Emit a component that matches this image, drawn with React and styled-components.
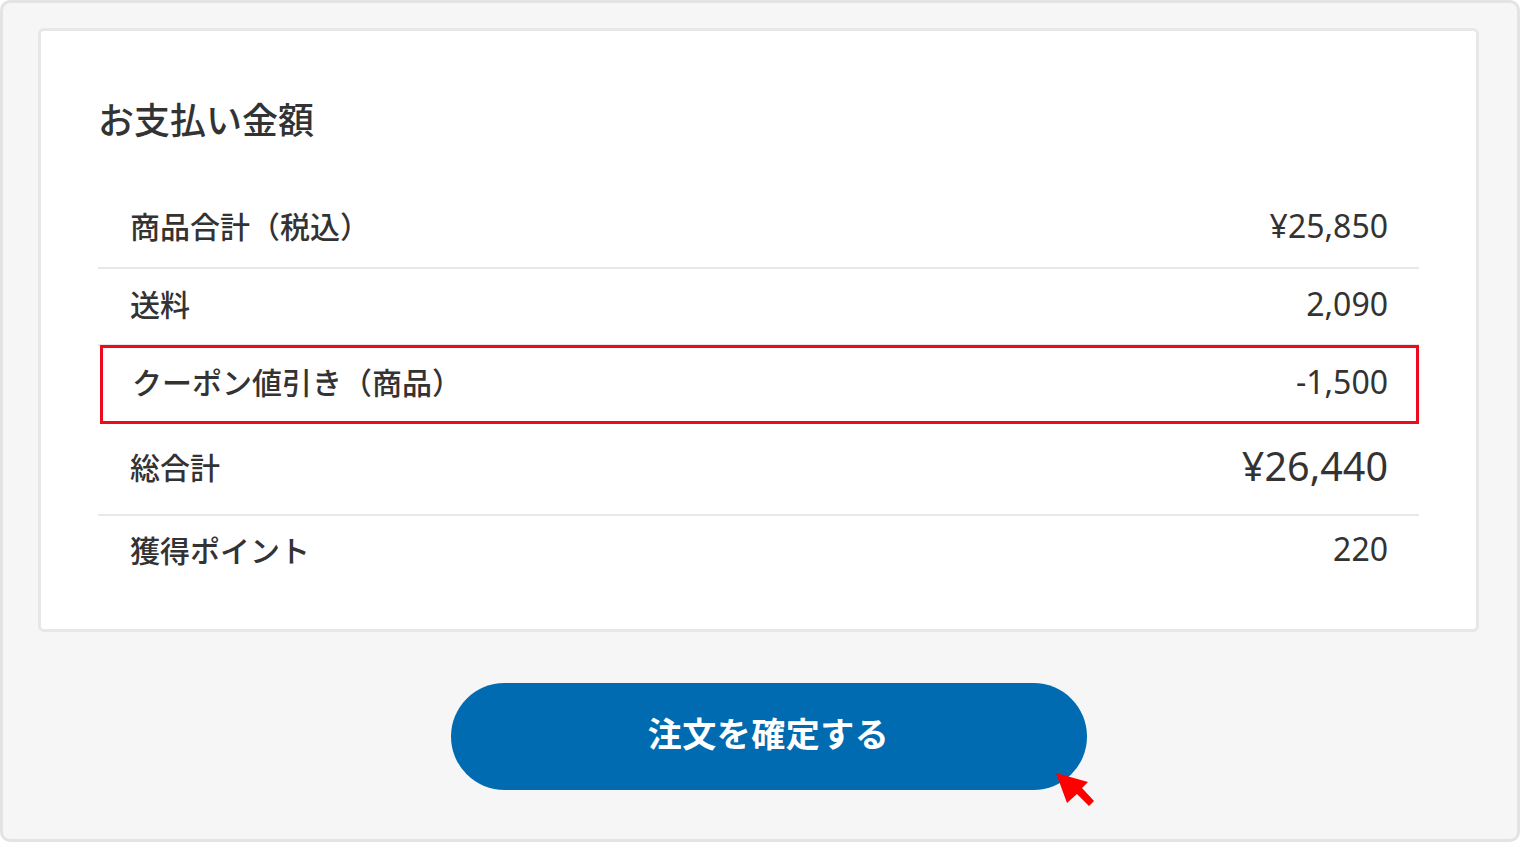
// Library& Package -----------------------------------------
import styled, { createGlobalStyle } from 'styled-components';

// Data ------------------------------------------------------
const rows = [
  { label: '商品合計（税込）', value: '¥25,850', height: 79 },
  { label: '送料', value: '2,090', height: 77 },
  { label: 'クーポン値引き（商品）', value: '-1,500', height: 79, highlight: true },
  { label: '総合計', value: '¥26,440', height: 92, big: true },
  { label: '獲得ポイント', value: '220', height: 72, last: true },
]

export default function App(){
  return <>
  <GlobalStyle />
  <DivFrame>
    <SectionCard>
      <H2Title>お支払い金額</H2Title>
      <DivList>
        {rows.map((row) => (
          <DivRow key={row.label} $height={row.height} $highlight={row.highlight} $last={row.last}>
            <SpanLabel>{row.label}</SpanLabel>
            <SpanValue $big={row.big}>{row.value}</SpanValue>
          </DivRow>
        ))}
      </DivList>
    </SectionCard>
    <DivButtonWrap>
      <DivButtonBox>
        <ButtonSubmit>注文を確定する</ButtonSubmit>
        <SvgArrow width="40" height="36" viewBox="0 0 40 36">
          <polygon points="0,0 32,9 26,15 38,28 33,33 21,21 11,30" fill="#ff0000" />
        </SvgArrow>
      </DivButtonBox>
    </DivButtonWrap>
  </DivFrame>
  </>
}

// Styled Components -----------------------------------------
const GlobalStyle = createGlobalStyle`
  body{
    margin: 0;
    font-family: "Noto Sans", "Noto Sans CJK JP", sans-serif;
    color: #333333;
  }
`

const DivFrame = styled.div`
  box-sizing: border-box;
  width: 1520px;
  height: 842px;
  padding: 25px 38px 0 35px;
  background-color: #f6f6f6;
  border: 3px solid #e3e3e3;
  border-radius: 10px;
`

const SectionCard = styled.section`
  box-sizing: border-box;
  width: 1441px;
  height: 604px;
  padding: 66px 57px 0 57px;
  background-color: #ffffff;
  border: 3px solid #e7e7e7;
  border-radius: 6px;
`

const H2Title = styled.h2`
  margin: 0 0 0 0;
  font-family: "Noto Sans CJK JP", sans-serif;
  font-size: 36px;
  font-weight: 500;
  line-height: 42px;
  color: #333333;
`

const DivList = styled.div`
  margin-top: 51px;
  display: flex;
  flex-direction: column;
`

const DivRow = styled.div`
  box-sizing: border-box;
  height: ${(p) => p.$height}px;
  display: flex;
  justify-content: space-between;
  align-items: center;
  padding: 0 ${(p) => (p.$highlight ? 28 : 31)}px 7px ${(p) => (p.$highlight ? 29 : 32)}px;
  border-bottom: ${(p) => (p.$last ? 'none' : '2px solid #e8e8e8')};
  ${(p) => p.$highlight && `
    margin: -1px 0 0 2px;
    border: 3px solid #ec0a1f;
  `}
`

const SpanLabel = styled.span`
  font-family: "Noto Sans CJK JP", sans-serif;
  font-size: 30px;
  font-weight: 500;
  color: #333333;
`

const SpanValue = styled.span`
  font-family: "Noto Sans", "Noto Sans CJK JP", sans-serif;
  font-size: ${(p) => (p.$big ? 39.5 : 32)}px;
  font-weight: 400;
  color: #333333;
`

const DivButtonWrap = styled.div`
  display: flex;
  justify-content: center;
  margin-top: 51px;
  padding-left: 20px;
`

const DivButtonBox = styled.div`
  position: relative;
`

const ButtonSubmit = styled.button`
  width: 636px;
  height: 107px;
  padding: 0 0 9px 0;
  border: none;
  border-radius: 54px;
  background-color: #006bb0;
  color: #ffffff;
  font-family: "Noto Sans CJK JP", sans-serif;
  font-size: 34px;
  font-weight: 700;
  letter-spacing: 0.5px;
  cursor: pointer;
`

const SvgArrow = styled.svg`
  position: absolute;
  left: 605px;
  top: 90px;
`
